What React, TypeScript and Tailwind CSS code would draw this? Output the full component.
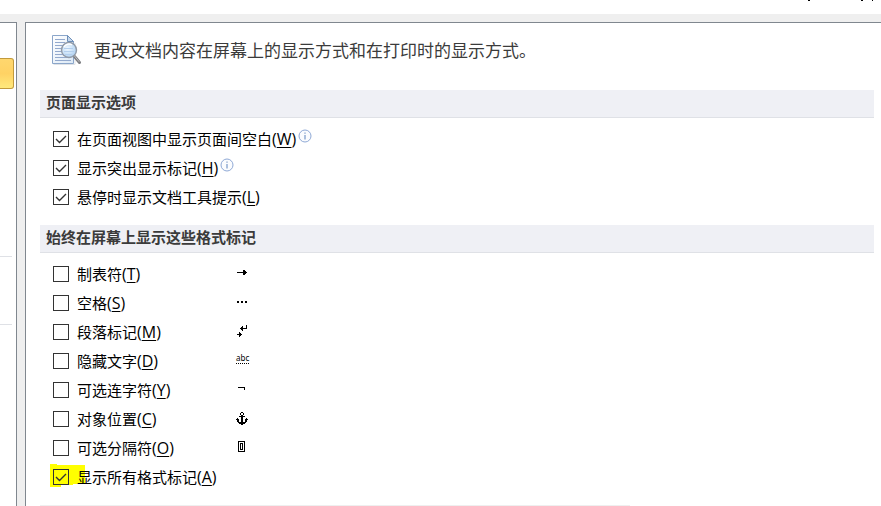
import { useId } from "react";
import type { ReactNode } from "react";

type Option = {
  label: string;
  hotkey: string;
  checked?: boolean;
  info?: boolean;
  highlight?: boolean;
  mark?: ReactNode;
};

function Mark({ children }: { children: ReactNode }) {
  return (
    <svg
      viewBox="0 0 14 15"
      className="mt-[7px] h-[15px] w-[14px] flex-none"
      shapeRendering="crispEdges"
      aria-hidden
    >
      {children}
    </svg>
  );
}

const PAGE_OPTIONS: Option[] = [
  { label: "在页面视图中显示页面间空白", hotkey: "W", checked: true, info: true },
  { label: "显示突出显示标记", hotkey: "H", checked: true, info: true },
  { label: "悬停时显示文档工具提示", hotkey: "L", checked: true },
];

const MARK_OPTIONS: Option[] = [
  {
    label: "制表符",
    hotkey: "T",
    mark: (
      <Mark>
        <path d="M1 5h10v1H1zM7 3h2v5H7zM9 4h1v3H9z" />
      </Mark>
    ),
  },
  {
    label: "空格",
    hotkey: "S",
    mark: (
      <Mark>
        <path d="M1 5h2v2H1zM5 5h2v2H5zM9 5h2v2H9z" />
      </Mark>
    ),
  },
  {
    label: "段落标记",
    hotkey: "M",
    mark: (
      <Mark>
        <path d="M10 0h1v4h-1zM4 3h6v1H4zM5 2h2v3H5zM6 1h1v5H6zM1 9h5v1H1zM3 7h1v5H3zM4 8h1v3H4z" />
      </Mark>
    ),
  },
  {
    label: "隐藏文字",
    hotkey: "D",
    mark: (
      <span className="mt-1.5 border-b border-dotted border-black font-['Noto_Sans',sans-serif] text-[8px] leading-[10px]">
        abc
      </span>
    ),
  },
  {
    label: "可选连字符",
    hotkey: "Y",
    mark: (
      <Mark>
        <path d="M2 4h7v1H2zM8 5h1v2H8z" />
      </Mark>
    ),
  },
  {
    label: "对象位置",
    hotkey: "C",
    mark: (
      <Mark>
        <path d="M5 0h2v1H5zM4 1h1v2H4zM7 1h1v2H7zM5 3h2v9H5zM3 4h6v1H3zM1 6h1v1H1zM10 6h1v1h-1zM0 7h3v1H0zM9 7h3v1H9zM1 8h2v2H1zM9 8h2v2H9zM2 10h3v1H2zM7 10h3v1H7zM3 11h6v1H3zM5 12h2v1H5z" />
      </Mark>
    ),
  },
  {
    label: "可选分隔符",
    hotkey: "O",
    mark: (
      <Mark>
        <path
          fillRule="evenodd"
          d="M2 0h7v11H2zM3 1v9h5V1zM4 2h3v7H4zM5 3v5h1V3z"
        />
      </Mark>
    ),
  },
  { label: "显示所有格式标记", hotkey: "A", checked: true, highlight: true },
];

function InfoIcon() {
  return (
    <svg
      viewBox="0 0 14 14"
      className="mb-1.5 ml-0.5 h-3.5 w-3.5 flex-none"
      aria-hidden
    >
      <circle cx="7" cy="7" r="6" fill="#fbfcfe" stroke="#8fa9d6" />
      <path d="M6.5 3.5h1v1.3h-1zM6.5 6h1v4.5h-1z" fill="#5f83bd" />
    </svg>
  );
}

function DocumentSearchIcon() {
  return (
    <svg viewBox="0 0 31 32" className="h-8 w-[31px] flex-none" aria-hidden>
      <defs>
        <linearGradient id="page" x1="0" y1="0" x2="1" y2="1">
          <stop offset="0" stopColor="#ffffff" />
          <stop offset="1" stopColor="#dce9f6" />
        </linearGradient>
        <radialGradient id="lens" cx="0.4" cy="0.4" r="0.75">
          <stop offset="0" stopColor="#f0f8ff" />
          <stop offset="1" stopColor="#a3caf0" />
        </radialGradient>
      </defs>
      <path d="M1.5 29.5H23V8" fill="none" stroke="#dfe2e6" />
      <path
        d="M.5.5h15l6 6v22H.5z"
        fill="url(#page)"
        stroke="#8ba6ca"
      />
      <path d="M15.500.5v6h6z" fill="#c4d7ec" stroke="#6d8fb9" />
      <path
        d="M3 4.500h10M3 7.500h10M3 10.500h16M3 13.500h16M3 16.500h16M3 19.500h16M3 22.500h16M3 25.500h16"
        stroke="#93a9cd"
      />
      <path d="M22.500 21.500l5 6" stroke="#7d7e82" strokeWidth="3" strokeLinecap="round" />
      <path d="M22.500 21l4.500 5.500" stroke="#bcbcbe" strokeLinecap="round" />
      <circle cx="17" cy="15" r="7.500" fill="url(#lens)" stroke="#929aa6" strokeWidth="1.400" />
      <path d="M12 13.500h9M12 16.500h10M13 19.500h7" stroke="#b3cfee" />
      <path d="M12 12a5.500 5.500 0 0 1 8-2" fill="none" stroke="#fff" strokeWidth="1.500" />
    </svg>
  );
}

function OptionRow({ option }: { option: Option }) {
  const id = useId();

  return (
    <li className="relative flex h-[29px] items-start pl-[13px]">
      {option.highlight && (
        <svg
          viewBox="0 0 36 24"
          className="absolute left-[9px] top-0 h-6 w-9"
          aria-hidden
        >
          <path d="M1 1h7v1h28v19H24v1H12v2H1z" fill="#ffff00" />
        </svg>
      )}
      <div className="relative flex h-7 w-[183px] flex-none items-center">
        <span className="grid flex-none">
          <input
            id={id}
            type="checkbox"
            defaultChecked={option.checked}
            className={`peer col-start-1 row-start-1 h-4 w-4 appearance-none border border-[#333333] ${
              option.highlight ? "bg-[#ffff00]" : "bg-white"
            }`}
          />
          <svg
            viewBox="0 0 16 16"
            className="pointer-events-none invisible col-start-1 row-start-1 h-4 w-4 peer-checked:visible"
            aria-hidden
          >
            <path
              d="M3 8l3.500 3.500L13 5"
              fill="none"
              stroke="#333333"
              strokeWidth="1.400"
            />
          </svg>
        </span>
        <label
          htmlFor={id}
          className="ml-2 whitespace-nowrap text-[15px] leading-5 text-black"
        >
          {option.label}
          <span className="text-[16px] leading-none">
            (
            <span className="underline underline-offset-2">
              {option.hotkey}
            </span>
            )
          </span>
        </label>
        {option.info && <InfoIcon />}
      </div>
      {option.mark}
    </li>
  );
}

function Section({ title, options }: { title: string; options: Option[] }) {
  return (
    <section className="mb-[13px]">
      <h2 className="flex h-7 items-center border-b border-[#dfe1e6] bg-[#eff0f5] pb-1 pl-1.5 text-[15px] font-bold leading-5 text-[#3b3b3b]">
        {title}
      </h2>
      <ul className="pt-[7px]">
        {options.map((option) => (
          <OptionRow key={option.hotkey} option={option} />
        ))}
      </ul>
    </section>
  );
}

export default function App() {
  return (
    <div className="flex min-h-screen flex-col bg-[#efefef] font-['Open_Sans','Noto_Sans_CJK_SC',sans-serif]">
      <header className="flex h-3.5 items-start justify-end bg-white pr-2">
        <span className="mr-[51px] h-px w-[2px] bg-black" />
        <span className="mr-[9px] h-px w-[2px] bg-black" />
        <span className="h-px w-px bg-black" />
      </header>

      <div className="flex flex-1 pt-2">
        <nav className="w-[17px] flex-none border-r border-t border-[#80878f] bg-white pt-[35px]">
          <button
            type="button"
            aria-label="显示"
            className="block h-[31px] w-3.5 rounded-r-[3px] border border-l-0 border-[#c29a3c] bg-linear-to-b from-[#ffd76e] via-[#ffd264] to-[#ffe97c]"
          />
          <hr className="mr-1 mt-[167px] border-[#dfe1e6]" />
          <hr className="mr-1 mt-[67px] border-[#dfe1e6]" />
        </nav>

        <main className="ml-2 min-w-0 flex-1 border-l border-t border-[#80878f] bg-white pl-3.5 pr-[7px]">
          <div className="mb-[11px] flex h-14 items-center pl-3">
            <DocumentSearchIcon />
            <h1 className="ml-[11px] text-[17px] leading-6 text-[#3b3b3b]">
              更改文档内容在屏幕上的显示方式和在打印时的显示方式。
            </h1>
          </div>
          <Section title="页面显示选项" options={PAGE_OPTIONS} />
          <Section title="始终在屏幕上显示这些格式标记" options={MARK_OPTIONS} />
          <hr className="w-[590px] max-w-full border-[#efefef]" />
        </main>
      </div>
    </div>
  );
}
